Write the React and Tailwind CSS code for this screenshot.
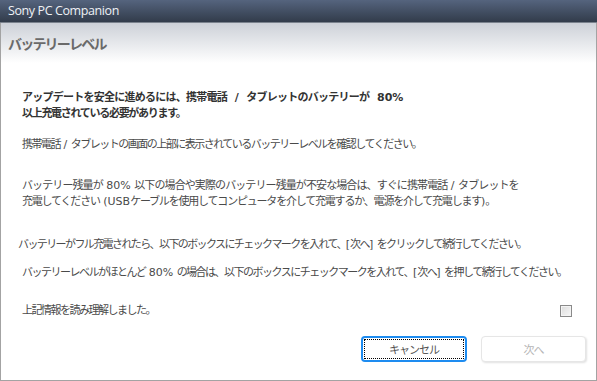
import React from "react";

const JP = { fontFamily: '"Noto Sans CJK JP", "Noto Sans", sans-serif' };
const LATIN = { fontFamily: '"DejaVu Sans", "Noto Sans", sans-serif' };

// latin runs keep normal spacing, the CJK text around them is squeezed
function L({ children }) {
  return (
    <span className="tracking-normal text-[11px] leading-none" style={LATIN}>
      {children}
    </span>
  );
}

function Line({ children, className = "", track = "tracking-[-1.5px]" }) {
  return (
    <p className={`text-[11px] leading-[16px] h-[16px] text-[#4a4a4a] whitespace-nowrap ${track} ${className}`}>
      {children}
    </p>
  );
}

export default function App() {
  return (
    <div className="w-[597px] h-[381px] flex flex-col bg-white overflow-hidden" style={JP}>
      <div className="h-[23px] shrink-0 flex items-center px-2 bg-gradient-to-b from-[#55647e] to-[#323c4b] border-b border-[#7a828d]">
        <span className="text-[12.5px] text-[#eef1f5] tracking-[-0.4px]" style={{ fontFamily: '"Open Sans", "Noto Sans", sans-serif' }}>
          Sony PC Companion
        </span>
      </div>

      <div className="flex-1 flex flex-col border-x border-b border-[#a3a3a3]">
        <div className="h-[40px] shrink-0 flex items-center px-[7px] bg-gradient-to-b from-[#cdd1d8] to-white">
          <h1 className="text-[14px] font-bold text-[#6a6a6a] tracking-[-1.8px]">バッテリーレベル</h1>
        </div>

        <div className="flex-1 flex flex-col pl-[21px] pr-[24px] pt-[25px]">
          <div className="font-bold [&_p]:text-[#333]">
            <Line track="tracking-[-0.75px]">
              アップデートを安全に進めるには、携帯電話<L>&nbsp; / &nbsp;</L>タブレットのバッテリーが<L>&nbsp; 80%</L>
            </Line>
            <Line track="tracking-[-1.3px]">以上充電されている必要があります。</Line>
          </div>

          <Line className="mt-[15px]">
            携帯電話<L> / </L>タブレットの画面の上部に表示されているバッテリーレベルを確認してください。
          </Line>

          <Line className="mt-[25px]" track="tracking-[-0.9px]">
            バッテリー残量が<L> 80% </L>以下の場合や実際のバッテリー残量が不安な場合は、すぐに携帯電話<L> / </L>タブレットを
          </Line>
          <Line track="tracking-[-1.2px]">
            充電してください<L> (USB</L>ケーブルを使用してコンピュータを介して充電するか、電源を介して充電します<L>)</L>。
          </Line>

          <Line className="mt-[27px] -ml-[4px]" track="tracking-[-1.6px]">
            バッテリーがフル充電されたら、以下のボックスにチェックマークを入れて、<L>[</L>次へ<L>] </L>をクリックして続行してください。
          </Line>

          <Line className="mt-[12px]">
            バッテリーレベルがほとんど<L> 80% </L>の場合は、以下のボックスにチェックマークを入れて、<L>[</L>次へ<L>] </L>を押して続行してください。
          </Line>

          <div className="mt-[22px] flex items-start justify-between">
            <Line>上記情報を読み理解しました。</Line>
            <span className="mt-[4px] w-[12px] h-[12px] border border-[#8a8a8a] bg-gradient-to-br from-[#dcdcdc] to-[#f8f8f8] shadow-[inset_0_0_0_1px_#f4f4f4]" />
          </div>

          <div className="mt-[19px] flex justify-end gap-[14px] -mr-[14px]">
            <button className="w-[106px] h-[26px] rounded-[4px] border-2 border-[#1e8cf0] p-[1px] bg-white">
              <span className="w-full h-full flex items-center justify-center border border-dotted border-black text-[11px] tracking-[-1px] text-[#555]">
                キャンセル
              </span>
            </button>
            <button className="w-[105px] h-[26px] rounded-[4px] border border-[#e6e6e6] bg-white shadow-[1px_1px_2px_rgba(0,0,0,0.12)] text-[11px] tracking-[-1px] text-[#b5b5b5]">
              次へ
            </button>
          </div>
        </div>
      </div>
    </div>
  );
}
